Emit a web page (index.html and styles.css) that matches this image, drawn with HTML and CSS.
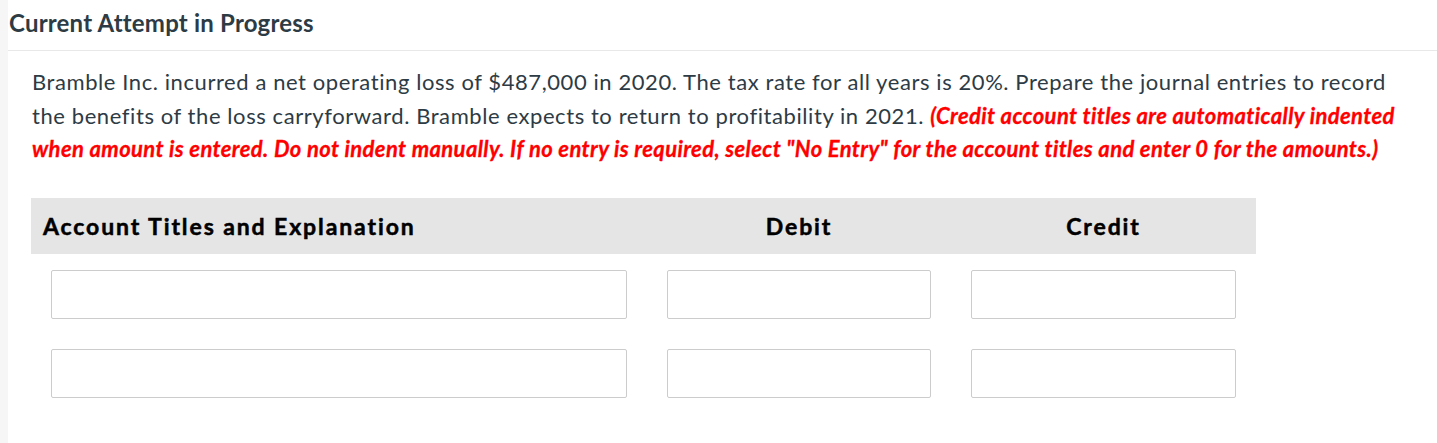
FILE: index.html
```html
<!DOCTYPE html>
<html lang="en">
<head>
<meta charset="utf-8">
<title>Current Attempt in Progress</title>
<link rel="stylesheet" href="styles.css">
</head>
<body>
<div class="page">
  <div class="rail"></div>
  <main class="content">
    <h2 class="title">Current Attempt in Progress</h2>
    <div class="question">
      <p class="prompt">Bramble Inc. incurred a net operating loss of $487,000 in 2020. The tax rate for all years is 20%. Prepare the journal entries to record the benefits of the loss carryforward. Bramble expects to return to profitability in 2021. <em class="note">(Credit account titles are automatically indented when amount is entered. Do not indent manually. If no entry is required, select "No Entry" for the account titles and enter 0 for the amounts.)</em></p>
      <div class="journal">
        <div class="jhead">
          <div class="hcell hcell-account">Account Titles and Explanation</div>
          <div class="hcell hcell-num">Debit</div>
          <div class="hcell hcell-num">Credit</div>
        </div>
        <div class="jrow">
          <div class="cell"><input class="field" type="text"></div>
          <div class="cell"><input class="field" type="text"></div>
          <div class="cell"><input class="field" type="text"></div>
        </div>
        <div class="jrow">
          <div class="cell"><input class="field" type="text"></div>
          <div class="cell"><input class="field" type="text"></div>
          <div class="cell"><input class="field" type="text"></div>
        </div>
      </div>
    </div>
  </main>
</div>
</body>
</html>
```
FILE: styles.css
```css
html, body {
  margin: 0;
  padding: 0;
  background: #ffffff;
}
body {
  font-family: Lato, "Liberation Sans", sans-serif;
  color: #2d3b45;
}
.page {
  display: flex;
  min-height: 443px;
}
.rail {
  width: 8px;
  flex: none;
  background: #f6f6f6;
}
.content {
  flex: 1;
  min-width: 0;
}
.title {
  margin: 0;
  padding: 6px 0 0 1px;
  height: 44px;
  font-size: 24px;
  line-height: 33px;
  font-weight: 700;
  letter-spacing: 0.2px;
  border-bottom: 1px solid #e8e8e8;
}
.question {
  padding: 14px 0 0 24px;
}
.prompt {
  margin: 0;
  font-size: 22px;
  line-height: 33.5px;
  letter-spacing: 0.58px;
  max-width: 1372px;
}
.note {
  color: #ff0000;
  font-weight: 700;
  font-style: italic;
  letter-spacing: 0.38px;
  -webkit-text-stroke: 0.3px #ff0000;
}
.journal {
  margin-top: 32px;
  width: 1225px;
  margin-left: -1px;
}
.jhead {
  display: grid;
  grid-template-columns: 616px 304px 305px;
  align-items: center;
  height: 56px;
  background: #e5e5e5;
  color: #000;
  font-weight: 700;
  font-size: 23px;
  letter-spacing: 1.9px;
  -webkit-text-stroke: 0.5px #000;
}
.hcell-account {
  padding-left: 12px;
}
.hcell-num {
  text-align: center;
}
.jrow {
  display: grid;
  grid-template-columns: 616px 304px 305px;
  margin-top: 16px;
}
.jrow + .jrow {
  margin-top: 30px;
}
.cell {
  padding: 0 20px;
}
.field {
  display: block;
  box-sizing: border-box;
  width: 100%;
  height: 49px;
  margin: 0;
  border: 1px solid #cccccc;
  border-radius: 2px;
  background: #fff;
  font: inherit;
}
```
